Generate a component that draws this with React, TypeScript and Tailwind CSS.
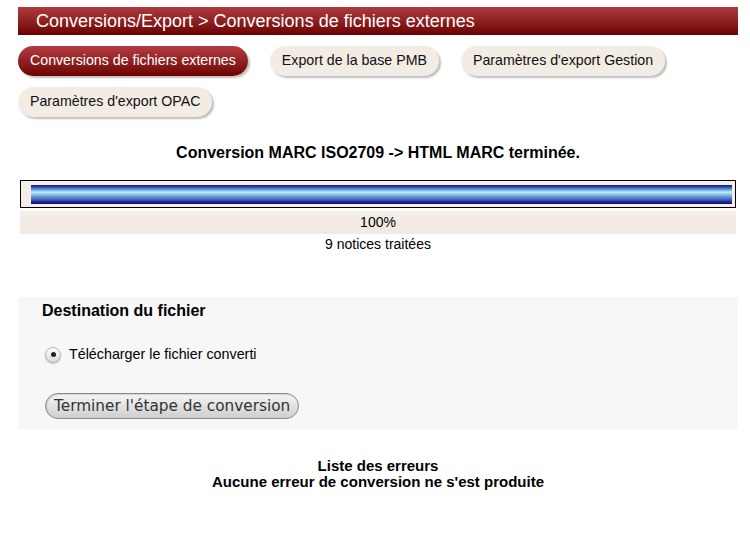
import React from 'react'

const TABS_ROW1 = [
  { label: 'Conversions de fichiers externes', active: true },
  { label: 'Export de la base PMB', active: false },
  { label: "Paramètres d'export Gestion", active: false },
]

const TABS_ROW2 = [{ label: "Paramètres d'export OPAC", active: false }]

function Tab({ label, active }: { label: string; active: boolean }) {
  return (
    <span
      className={`inline-flex h-[30px] items-center rounded-[15px] px-3 text-[14.2px] shadow-[2px_2px_2px_rgba(0,0,0,0.25)] ${
        active
          ? 'bg-gradient-to-b from-[#b43c40] to-[#6e0000] text-white'
          : 'bg-[#f2ece4] text-[#111]'
      }`}
    >
      {label}
    </span>
  )
}

export default function App() {
  return (
    <div className="min-h-[548px] bg-white font-['Liberation_Sans',Arial,sans-serif] text-black">
      <div className="ml-[18px] w-[720px] pt-[7px]">
        {/* Title bar */}
        <div className="flex h-[28px] items-center bg-gradient-to-b from-[#b03a3e] to-[#6c0000] pl-[18px] text-[18px] text-white">
          Conversions/Export &gt; Conversions de fichiers externes
        </div>

        {/* Tabs */}
        <div className="mt-[11px] flex flex-col gap-[11px]">
          <div className="flex gap-[22px]">
            {TABS_ROW1.map(t => (
              <Tab key={t.label} {...t} />
            ))}
          </div>
          <div className="flex gap-[22px]">
            {TABS_ROW2.map(t => (
              <Tab key={t.label} {...t} />
            ))}
          </div>
        </div>

        {/* Result */}
        <h2 className="mt-[27px] text-center text-[16px] font-bold leading-[18px]">
          Conversion MARC ISO2709 -&gt; HTML MARC terminée.
        </h2>

        <div className="mx-[2px] mt-[18px]">
          <div className="h-[28px] border border-black bg-[#f4eee6] pl-[10px] pr-[3px] pt-[4px]">
            <div className="h-[19px] w-full bg-[linear-gradient(to_bottom,#141480_0%,#3050b0_12%,#7fb4e8_28%,#b4f4fa_38%,#80aee0_55%,#4868c0_75%,#1c2490_90%,#0c0c70_100%)]" />
          </div>
          <div className="mt-[3px] flex h-[23px] items-center justify-center bg-gradient-to-b from-[#f5eee4] to-[#f0e9e4] text-[14px]">
            100%
          </div>
          <div className="mt-[1px] text-center text-[14px] leading-[18px]">9 notices traitées</div>
        </div>

        {/* Destination */}
        <div className="mt-[44px] h-[132px] bg-[#f7f7f7] pl-[24px] pt-[4px]">
          <h3 className="text-[16px] font-bold leading-[20px]">Destination du fichier</h3>
          <label className="mt-[23px] flex items-center gap-[8px] pl-[3px] text-[14.3px]">
            <span className="flex h-[16px] w-[16px] items-center justify-center rounded-full border border-[#b0b0b0] bg-gradient-to-b from-[#fdfdfd] to-[#dcdcdc] shadow-[0_1px_1px_rgba(0,0,0,0.2)]">
              <span className="h-[5px] w-[5px] rounded-full bg-[#222]" />
            </span>
            Télécharger le fichier converti
          </label>
          <button className="ml-[3px] mt-[28px] flex h-[26px] items-center rounded-full border border-[#8a8a8a] bg-gradient-to-b from-[#f6f6f6] to-[#cfcfcf] px-[8px] font-['DejaVu_Sans',sans-serif] text-[15.3px] text-[#333] shadow-[inset_1px_1px_1px_rgba(0,0,0,0.15)]">
            Terminer l'étape de conversion
          </button>
        </div>

        {/* Errors */}
        <div className="mt-[29px] text-center text-[15px] font-bold leading-[16px]">
          <div>Liste des erreurs</div>
          <div>Aucune erreur de conversion ne s'est produite</div>
        </div>
      </div>
    </div>
  )
}
